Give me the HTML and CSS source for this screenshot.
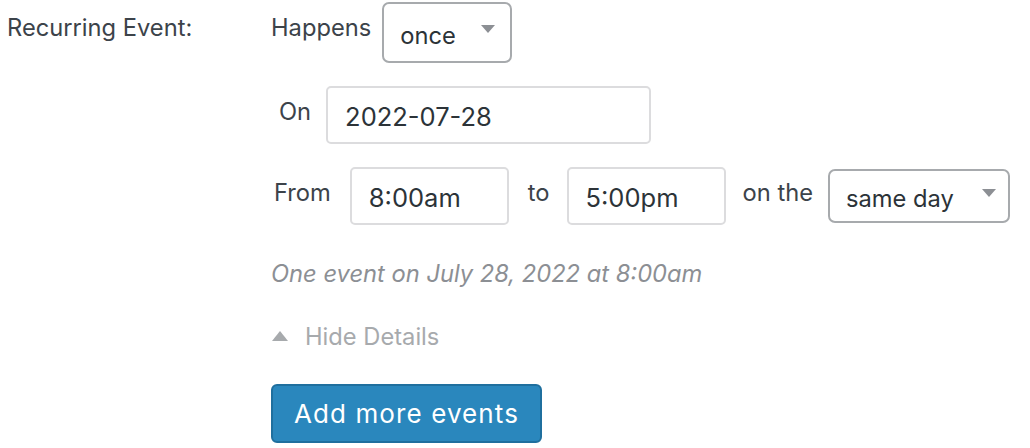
FILE: index.html
```html
<!DOCTYPE html>
<html>
<head>
<meta charset="utf-8">
<link rel="stylesheet" href="styles.css">
</head>
<body>
<div class="field">
  <div class="field-label">Recurring Event:</div>
  <div class="field-body">
    <div class="row row-happens">
      <span class="lbl">Happens</span>
      <div class="select select-once"><span>once</span><span class="caret"></span></div>
    </div>
    <div class="row row-on">
      <span class="lbl lbl-on">On</span>
      <div class="input input-date">2022-07-28</div>
    </div>
    <div class="row row-time">
      <span class="lbl lbl-from">From</span>
      <div class="input input-time">8:00am</div>
      <span class="lbl lbl-to">to</span>
      <div class="input input-time">5:00pm</div>
      <span class="lbl lbl-onthe">on the</span>
      <div class="select select-day"><span>same day</span><span class="caret"></span></div>
    </div>
    <p class="summary">One event on July 28, 2022 at 8:00am</p>
    <div class="toggle"><span class="tri"></span><span>Hide Details</span></div>
    <button class="btn">Add more events</button>
  </div>
</div>
</body>
</html>
```
FILE: styles.css
```css
html, body {
  margin: 0;
  padding: 0;
  background: #fff;
}
body {
  font-family: Inter, "Liberation Sans", sans-serif;
  font-size: 23.7px;
  color: #3c434a;
}
.field {
  display: flex;
}
.field-label {
  width: 264px;
  padding-left: 7px;
  padding-top: 13px;
  line-height: 30px;
}
.field-body {
  display: flex;
  flex-direction: column;
  align-items: flex-start;
}
.row {
  display: flex;
  align-items: center;
}
.row-happens {
  margin-top: 2px;
}
.row-on {
  margin-top: 23px;
}
.row-time {
  margin-top: 23px;
}
.lbl {
  line-height: 30px;
  position: relative;
  top: -4px;
}
.lbl-on { margin-left: 8px; margin-right: 15px; top: -3px; }
.row-happens .lbl { margin-right: 11px; top: -5px; }
.lbl-from { margin-left: 3px; margin-right: 19px; top: -3px; }
.lbl-to { margin-left: 19px; margin-right: 17px; top: -3px; }
.lbl-onthe { margin-left: 17px; margin-right: 15px; top: -3px; }
.select {
  box-sizing: border-box;
  display: flex;
  align-items: center;
  justify-content: space-between;
  border: 2px solid #a7aaad;
  border-radius: 7px;
  color: #2c3338;
  background: #fff;
}
.select-once {
  width: 130px;
  height: 61px;
  padding: 6px 15px 0 16px;
}
.select-once .caret { margin-top: -14px; }
.select-day {
  width: 182px;
  height: 54px;
  padding: 4px 12px 0 16px;
}
.select-day .caret { margin-top: -10px; }
.caret {
  width: 0;
  height: 0;
  border-left: 7px solid transparent;
  border-right: 7px solid transparent;
  border-top: 8px solid #8c8f94;
}
.input {
  box-sizing: border-box;
  display: flex;
  align-items: center;
  border: 2px solid #dcdcde;
  border-radius: 5px;
  color: #2c3338;
  height: 58px;
  padding: 2px 0 0 17px;
  background: #fff;
  font-size: 25.5px;
}
.input-date { width: 325px; }
.input-time { width: 159px; }
.summary {
  margin: 34px 0 0 0;
  font-style: italic;
  color: #8c8f94;
  line-height: 30px;
}
.toggle {
  margin-top: 33px;
  display: flex;
  align-items: center;
  color: #a7aaad;
  line-height: 30px;
}
.tri {
  width: 0;
  height: 0;
  border-left: 8px solid transparent;
  border-right: 8px solid transparent;
  border-bottom: 10px solid #a7aaad;
  margin-left: 1px;
  margin-right: 17px;
  margin-top: -3px;
}
.btn {
  margin-top: 32px;
  box-sizing: border-box;
  width: 271px;
  height: 59px;
  background: #2a87bd;
  border: 2px solid #1f6f9e;
  border-radius: 6px;
  color: #fff;
  font-family: inherit;
  font-size: 26px;
  letter-spacing: 1.1px;
  padding: 0;
}
```
